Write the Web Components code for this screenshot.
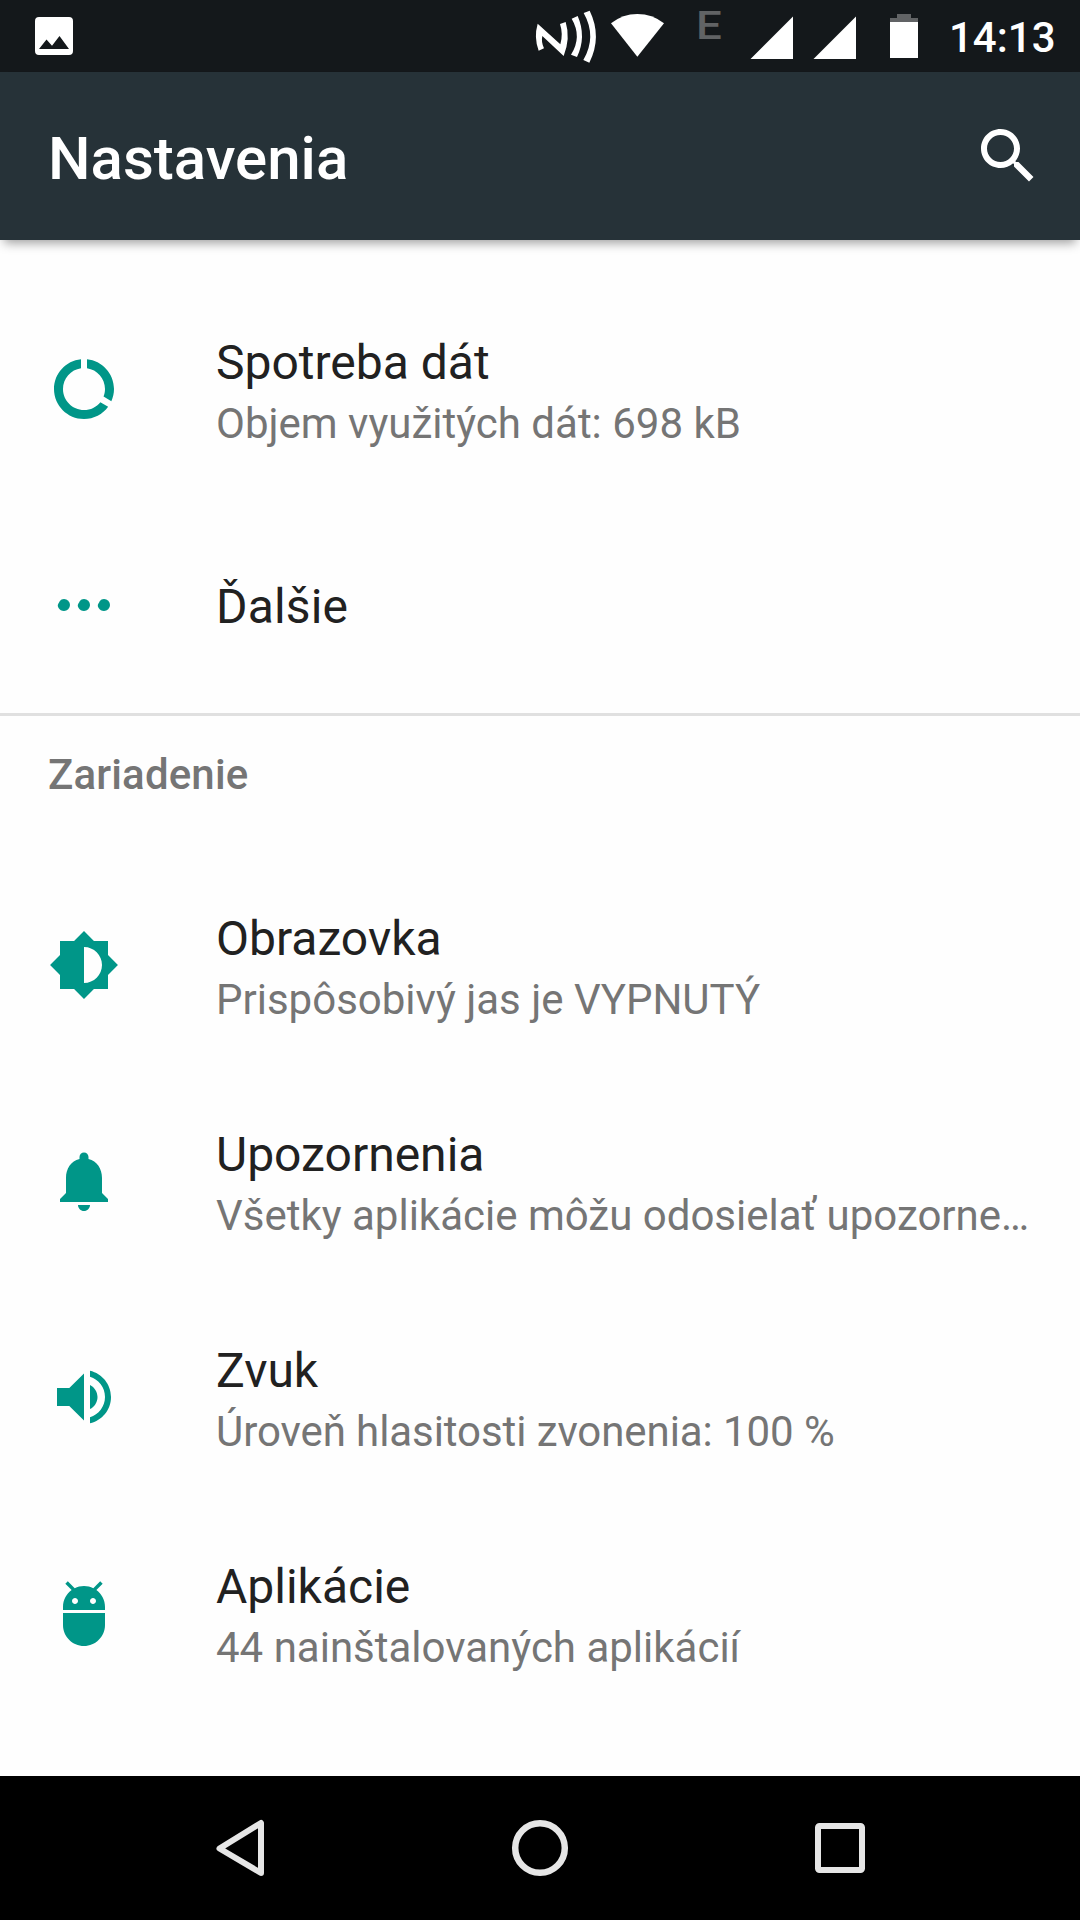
<!DOCTYPE html>
<html lang="sk">
<head>
<meta charset="utf-8">
<title>Nastavenia</title>
<style>
body{margin:0;background:#fefefe;font-family:Roboto,"Noto Sans",sans-serif}
</style>
</head>
<body>
<settings-screen></settings-screen>
<script>
const define=(name,html)=>{
  const t=document.createElement('template');
  t.innerHTML=html;
  customElements.define(name,class extends HTMLElement{
    constructor(){super();this.attachShadow({mode:'open'}).append(t.content.cloneNode(true));}
  });
};

const ICONS={
  search:'<path d="M15.5 14h-.79l-.28-.27C15.41 12.59 16 11.11 16 9.5 16 5.91 13.09 3 9.5 3S3 5.91 3 9.5 5.91 16 9.5 16c1.61 0 3.09-.59 4.23-1.57l.27.28v.79l5 4.99L20.49 19l-4.99-5zm-6 0C7.01 14 5 11.99 5 9.5S7.01 5 9.5 5 14 7.01 14 9.5 11.99 14 9.5 14z"/>',
  data:'<path d="M13 2.05v3.03c3.39.49 6 3.39 6 6.92 0 .9-.18 1.75-.48 2.54l2.6 1.53c.56-1.24.88-2.62.88-4.07 0-5.18-3.95-9.45-9-9.95zM12 19c-3.87 0-7-3.13-7-7 0-3.53 2.61-6.43 6-6.92V2.05c-5.06.5-9 4.76-9 9.95 0 5.52 4.47 10 9.99 10 3.31 0 6.24-1.61 8.06-4.09l-2.6-1.53C16.17 17.98 14.21 19 12 19z"/>',
  more:[3.33,10,16.67].map(x=>`<path transform="translate(${x} 10)" d="M2 0a2 2 0 1 1 0 4C1.200 4 .6 3.600 .2 3C-.15 2.450 -.15 2.100 .1 1.600L.6 .75C.9 .3 1.400 0 2 0z"/>`).join(''),
  display:'<path d="M20 15.31L23.31 12 20 8.69V4h-4.69L12 .69 8.69 4H4v4.69L.69 12 4 15.31V20h4.69L12 23.31 15.31 20H20v-4.69zM12 18V6c3.31 0 6 2.69 6 6s-2.69 6-6 6z"/>',
  bell:'<path d="M12 22c1.1 0 2-.9 2-2h-4c0 1.1.89 2 2 2zm6-6v-5c0-3.07-1.64-5.64-4.5-6.32V4c0-.83-.67-1.5-1.5-1.5s-1.5.67-1.5 1.5v.68C7.63 5.36 6 7.92 6 11v5l-2 2v1h16v-1l-2-2z"/>',
  sound:'<path d="M3 9v6h4.100L12 19.800V4.200L7.100 9H3zm13.500 3c0-1.77-1.02-3.29-2.5-4.03v8.05c1.48-.73 2.5-2.25 2.5-4.02zM14 3.23v2.06c2.89.86 5 3.54 5 6.71s-2.11 5.85-5 6.71v2.06c4.01-.91 7-4.49 7-8.77s-2.99-7.86-7-8.77z"/>',
  apps:'<path d="M5 16c0 3.87 3.13 7 7 7s7-3.13 7-7v-4H5v4zM16.12 4.37l2.1-2.1-.82-.83-2.3 2.31C14.16 3.28 13.12 3 12 3s-2.16.28-3.09.75L6.6 1.44l-.82.83 2.1 2.1C6.14 5.64 5 7.68 5 10v1h14v-1c0-2.32-1.14-4.36-2.88-5.63zM9 9c-.55 0-1-.45-1-1s.45-1 1-1 1 .45 1 1-.45 1-1 1zm6 0c-.55 0-1-.45-1-1s.45-1 1-1 1 .45 1 1-.45 1-1 1z"/>'
};
customElements.define('md-icon',class extends HTMLElement{
  constructor(){super();this.attachShadow({mode:'open'});}
  connectedCallback(){
    this.shadowRoot.innerHTML=`<style>:host{display:block;flex:none;width:72px;height:72px}svg{display:block;fill:currentColor}</style><svg width="72" height="72" viewBox="0 0 24 24">${ICONS[this.getAttribute('name')]}</svg>`;
  }
});

define('status-bar',`<style>
:host{display:flex;height:72px;background:#14181b;color:#fff}
svg{display:block;flex:none;fill:#fff}
.left{margin-left:35px;flex:1}
.tray{display:flex;flex:none}
.net{width:84px;box-sizing:border-box;padding-left:30px;color:#616365;font:500 39px/53px Roboto,sans-serif;height:72px}
.net span{display:inline-block;transform:scaleX(1.17);transform-origin:0 0}
.time{width:132px;box-sizing:border-box;padding-left:1px;font:500 42px/76px Roboto,sans-serif;white-space:nowrap}
</style>
<div class="left"><svg width="38" height="72"><path fill-rule="evenodd" d="M4 17h30a4 4 0 0 1 4 4v30a4 4 0 0 1-4 4H4a4 4 0 0 1-4-4V21a4 4 0 0 1 4-4zM4 49h30L24.500 36 17 45.700 11.500 39.500z"/></svg></div>
<div class="tray">
<svg width="86" height="72" viewBox="0 0 258 216"><path d="M53 71L121 133Q130 102 120 72L137 66Q152 115 131 168L67 108Q63 126 72 145L56 152Q41 112 53 71zM155 56L173 48Q200 110 171 171L153 164Q187 110 155 56zM191 39L209 32Q247 110 208 188L190 180Q231 110 191 39z"/></svg>
<svg width="60" height="72" viewBox="258 0 180 216"><path d="M273 70Q308 42 352 42Q397 42 432 70L352 170z"/></svg>
<div class="net"><span>E</span></div>
<svg width="112" height="72"><path d="M.5 59L43 16.500V59zM63.500 59L106 16.500V59z"/></svg>
<svg width="86" height="72"><path fill="#616365" d="M35 14h14v4h7v4H28v-4h7z"/><path d="M28 22h28v36H28z"/></svg>
<div class="time">14:13</div>
</div>`);

define('app-bar',`<style>
:host{display:flex;align-items:center;justify-content:space-between;height:168px;box-sizing:border-box;padding:0 36px 0 48px;background:#263238;color:#fff;box-shadow:0 7px 10px -4px rgba(0,0,0,.38)}
h1{margin:6px 0 0;font:500 60px/72px Roboto,sans-serif}
</style><h1><slot></slot></h1><md-icon name="search"></md-icon>`);

customElements.define('settings-item',class extends HTMLElement{
  constructor(){super();this.attachShadow({mode:'open'});}
  connectedCallback(){
    this.shadowRoot.innerHTML=`<style>
:host{display:flex;align-items:center;height:216px;box-sizing:border-box;padding:0 48px}
md-icon{color:#009688;margin-right:96px}
.text{flex:1;min-width:0;padding-top:4px}
:host([single]) .text{padding-top:2px;letter-spacing:.15px}
.title{font-size:48px;line-height:65px;color:#212121}
::slotted(*){display:block;font-size:42px;line-height:57px;color:#757575;white-space:nowrap}
</style><md-icon name="${this.getAttribute('icon')}"></md-icon><div class="text"><div class="title">${this.getAttribute('label')}</div><slot></slot></div>`;
  }
});

define('settings-category',`<style>
:host{display:block}
h2{margin:0;height:141px;box-sizing:border-box;padding:30px 48px 0;border:0;font:500 42px/57px Roboto,sans-serif;letter-spacing:.15px;color:#757575}
hr{margin:0;border:0;height:3px;background:#e0e0e0}
</style><hr><h2><slot></slot></h2>`);

define('nav-bar',`<style>
:host{display:flex;justify-content:center;height:144px;background:#000}
svg{display:block;width:300px;height:144px;fill:none;stroke:#e6e6e6;stroke-width:6;stroke-linejoin:round}
</style>
<svg><path d="M171 47v50L129.500 72.500z"/></svg>
<svg><circle cx="150" cy="72" r="24.800" stroke-width="6.500"/></svg>
<svg><rect x="128" y="50" width="44" height="44" rx="1.500"/></svg>`);

define('settings-screen',`<style>
:host{display:flex;flex-direction:column;width:1080px;height:1920px;overflow:hidden;background:#fefefe}
main{flex:1;padding-top:41px;box-sizing:border-box}
app-bar{position:relative;z-index:1}
.sound{letter-spacing:-.08px}
</style>
<status-bar></status-bar>
<app-bar>Nastavenia</app-bar>
<main>
<settings-item icon="data" label="Spotreba dát"><span>Objem využitých dát: 698 kB</span></settings-item>
<settings-item single icon="more" label="Ďalšie"></settings-item>
<settings-category>Zariadenie</settings-category>
<settings-item icon="display" label="Obrazovka"><span>Prispôsobivý jas je VYPNUTÝ</span></settings-item>
<settings-item icon="bell" label="Upozornenia"><span>Všetky aplikácie môžu odosielať upozorne…</span></settings-item>
<settings-item icon="sound" label="Zvuk"><span class="sound">Úroveň hlasitosti zvonenia: 100 %</span></settings-item>
<settings-item icon="apps" label="Aplikácie"><span>44 nainštalovaných aplikácií</span></settings-item>
</main>
<nav-bar></nav-bar>`);
</script>
</body>
</html>
